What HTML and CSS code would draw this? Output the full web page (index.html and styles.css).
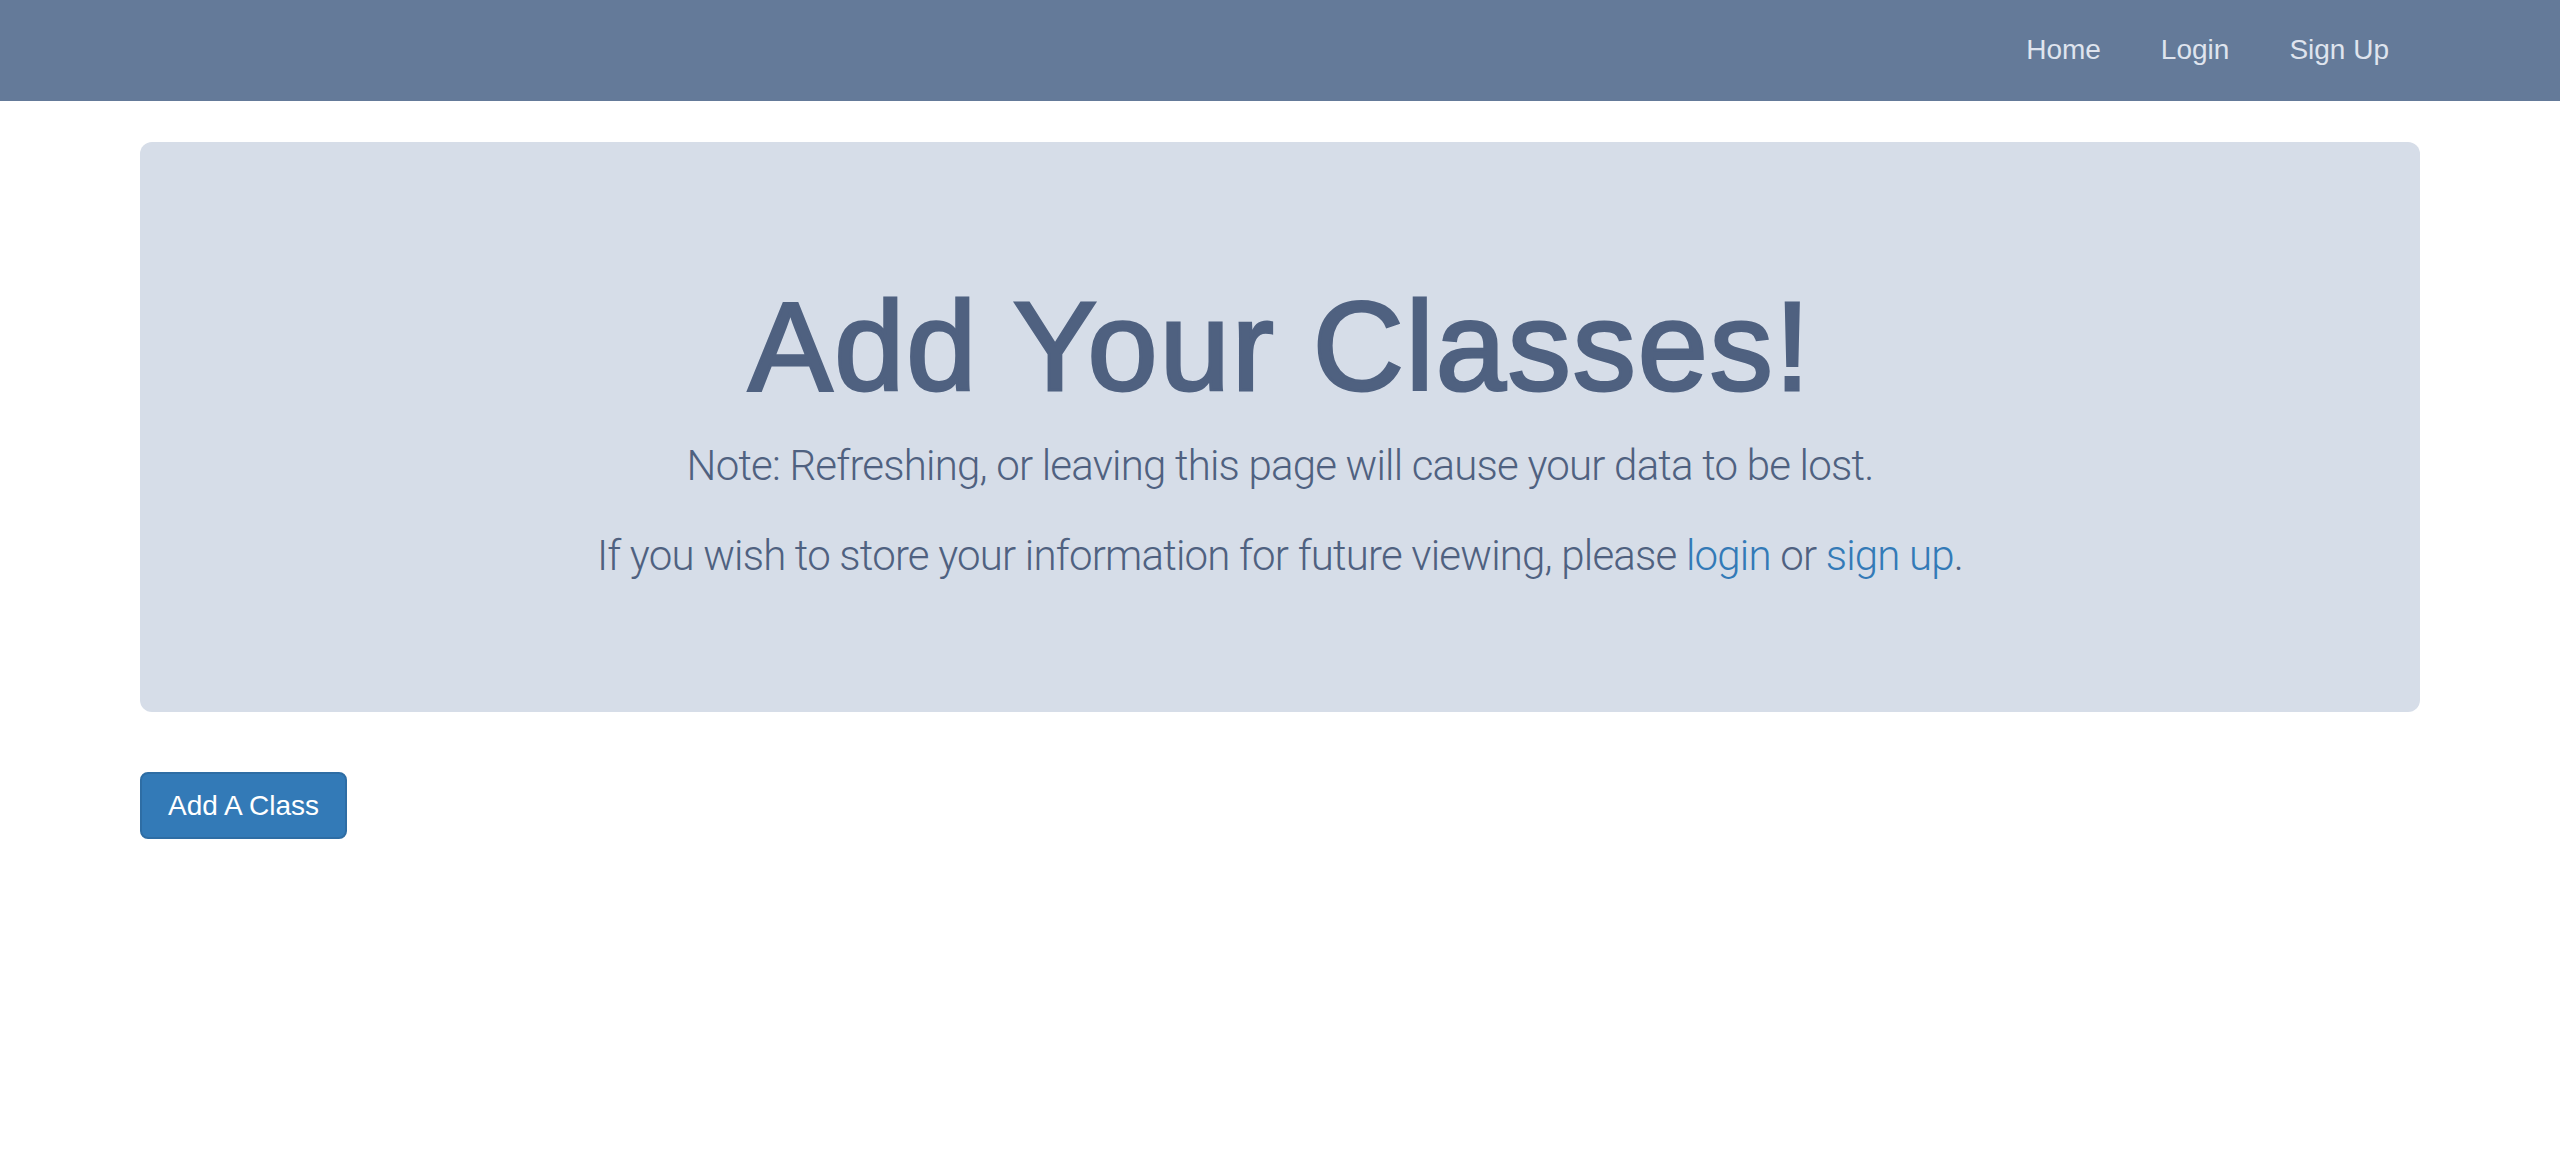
FILE: index.html
```html
<!DOCTYPE html>
<html lang="en">
<head>
<meta charset="utf-8">
<title>Add Your Classes</title>
<link rel="stylesheet" href="styles.css">
</head>
<body>
<nav class="navbar">
  <div class="container nav-inner">
    <ul class="nav">
      <li><a href="#">Home</a></li>
      <li><a href="#">Login</a></li>
      <li><a href="#">Sign Up</a></li>
    </ul>
  </div>
</nav>
<main class="container">
  <section class="jumbotron">
    <h1>Add Your Classes!</h1>
    <p>Note: Refreshing, or leaving this page will cause your data to be lost.</p>
    <p>If you wish to store your information for future viewing, please <a href="#">login</a> or <a href="#">sign up</a>.</p>
  </section>
  <button class="btn" type="button">Add A Class</button>
</main>
</body>
</html>
```
FILE: styles.css
```css
* { box-sizing: border-box; }
html, body { margin: 0; padding: 0; background: #ffffff; }
body {
  font-family: "Liberation Sans", Arial, sans-serif;
  font-size: 28px;
  line-height: 40px;
  color: #333;
}
.container {
  width: 2340px;
  margin: 0 auto;
  padding: 0 30px;
}
.navbar {
  background: #647a99;
  height: 101px;
  margin-bottom: 41px;
}
.nav-inner {
  display: flex;
  justify-content: flex-end;
}
.nav {
  list-style: none;
  margin: 0 1px 0 0;
  padding: 0;
  display: flex;
}
.nav a {
  display: block;
  padding: 30px;
  line-height: 40px;
  font-size: 28px;
  color: #dfe4ee;
  text-decoration: none;
}
.jumbotron {
  background: #d6dde8;
  border-radius: 12px;
  padding: 96px 120px;
  margin-bottom: 60px;
  text-align: center;
  color: #4f6180;
}
.jumbotron h1 {
  font-family: "Liberation Sans", Arial, sans-serif;
  font-weight: 400;
  font-size: 126px;
  line-height: 138px;
  letter-spacing: 2px;
  margin: 40px 0 20px;
  color: #4f6180;
  -webkit-text-stroke: 3px #4f6180;
}
.jumbotron p {
  font-family: Roboto, "Liberation Sans", sans-serif;
  font-weight: 300;
  font-size: 42px;
  line-height: 60px;
  letter-spacing: -0.8px;
  margin: 0 0 30px;
  color: #4f6180;
}
.jumbotron a {
  color: #337ab7;
  text-decoration: none;
}
.btn {
  display: inline-block;
  font-family: "Liberation Sans", Arial, sans-serif;
  font-size: 28px;
  line-height: 40px;
  padding: 12px 26px 11px;
  color: #ffffff;
  background: #337ab7;
  border: 2px solid #2e6da4;
  border-radius: 8px;
  cursor: pointer;
}
```
